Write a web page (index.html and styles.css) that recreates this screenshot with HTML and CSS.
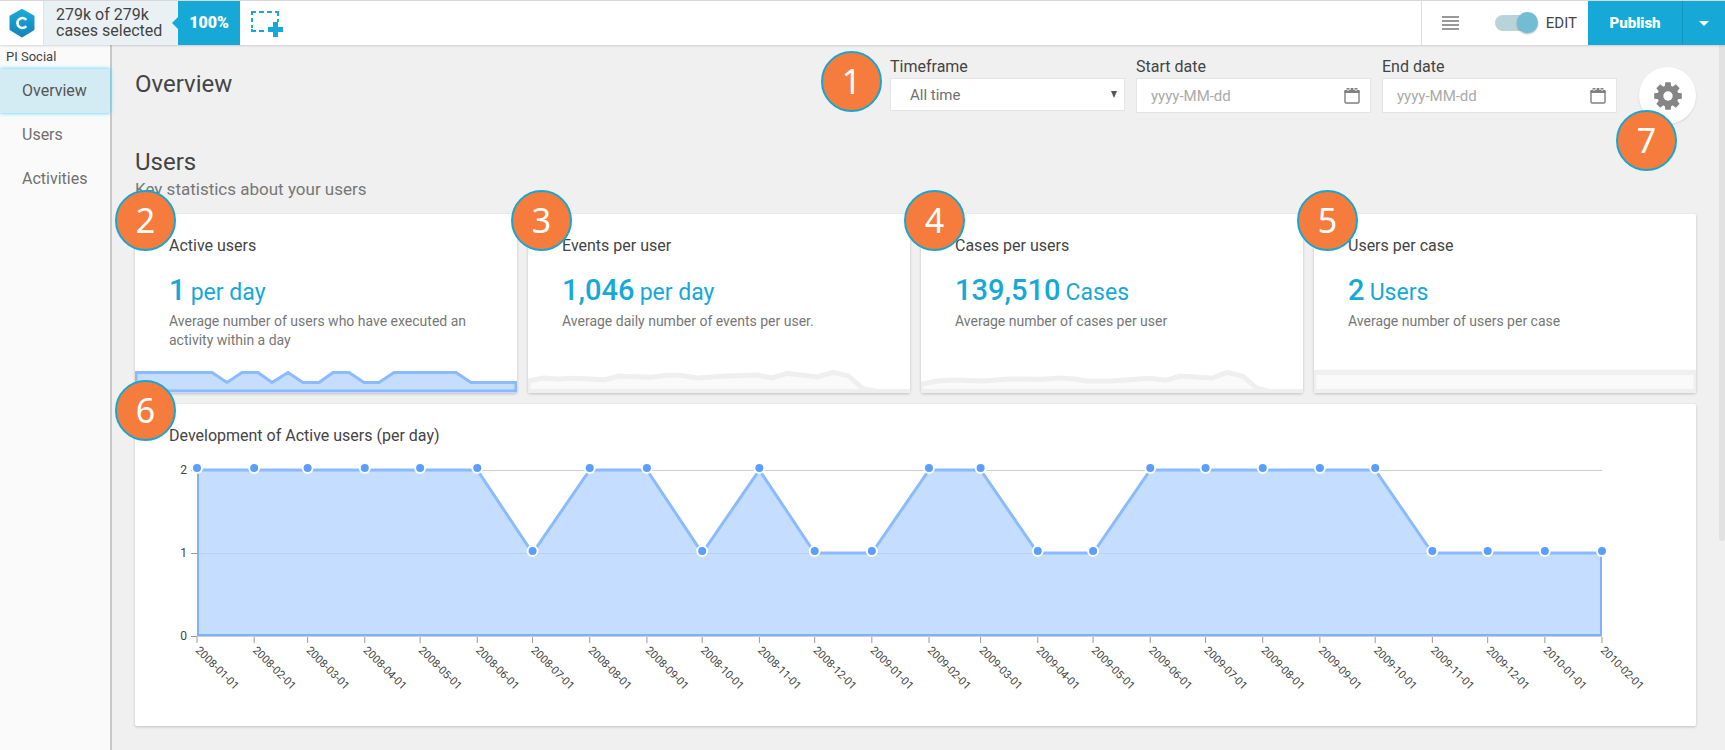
FILE: index.html
```html
<!DOCTYPE html>
<html lang="en">
<head>
    <meta charset="UTF-8">
    <meta name="viewport" content="width=device-width, initial-scale=1">
    <title>PI Social - Overview</title>

    <link rel="stylesheet" href="styles.css">
</head>
<body>

<header class="topbar">
    <a class="logo" href="#" aria-label="Home">
        <svg width="26" height="30" viewBox="0 0 26 30">
            <defs>
                <linearGradient id="logo-fill" x1="0" y1="0" x2="0" y2="1">
                    <stop offset="0" stop-color="#1aabd9"/>
                    <stop offset="1" stop-color="#1384b8"/>
                </linearGradient>
            </defs>
            <path d="M13 2 L24.500 8.300 V21.500 L13 28.500 L1.500 21.500 V8.300 Z" fill="url(#logo-fill)" stroke="url(#logo-fill)" stroke-width="2" stroke-linejoin="round"/>
            <path d="M17.300 11.800 A5 5 0 1 0 17.300 18.200" fill="none" stroke="#fff" stroke-width="2.600"/>
        </svg>
    </a>
    <div class="selection">279k of 279k<br>cases selected</div>
    <div class="percent">100%</div>
    <button class="icon-button add-selection" type="button" aria-label="Add selection">
        <svg width="34" height="28" viewBox="0 0 34 28" fill="none" stroke="#16a9d7">
            <path d="M2 6 V3 H6 M9 3 H14 M17 3 H22 M25 3 H28 V7 M28 10 V13 M2 9 V13 M2 16 V19 M2 20 V22 H6 M9 22 H14" stroke-width="2"/>
            <path d="M25.500 13 V28 M18 20.500 H33" stroke-width="5"/>
        </svg>
    </button>

    <div class="tools">
        <button class="icon-button" type="button" aria-label="List view">
            <svg width="17" height="14" viewBox="0 0 17 14" stroke="#999" stroke-width="2">
                <path d="M0 1 H17 M0 5 H17 M0 9 H17 M0 13 H17"/>
            </svg>
        </button>
        <label class="switch">
            <input class="switch-input" type="checkbox" checked>
            EDIT
        </label>
    </div>
    <button class="publish" type="button">Publish</button>
    <button class="publish-more" type="button" aria-label="More publish options">
        <svg width="10" height="5" viewBox="0 0 10 5"><path d="M0 0 H10 L5 5 Z" fill="#fff"/></svg>
    </button>
</header>

<div class="layout">
    <nav class="sidebar">
        <div class="sidebar-title">PI Social</div>
        <a class="sidebar-link active" href="#">Overview</a>
        <a class="sidebar-link" href="#">Users</a>
        <a class="sidebar-link" href="#">Activities</a>
    </nav>

    <main class="content">
        <div class="page-header">
            <h1 class="heading">Overview</h1>

            <form class="filters" action="/">
                <div class="filter">
                    <span class="marker marker-filter">1</span>
                    <label for="timeframe">Timeframe</label>
                    <div class="field field-select">
                        <select class="field-input" id="timeframe" name="timeframe">
                            <option>All time</option>
                        </select>
                        <svg class="field-icon arrow" width="6" height="7" viewBox="0 0 6 7"><path d="M0 0 H6 L3 7 Z" fill="#555"/></svg>
                    </div>
                </div>
                <div class="filter">
                    <label for="start">Start date</label>
                    <div class="field">
                        <input class="field-input" type="text" name="start" id="start" placeholder="yyyy-MM-dd">
                        <svg class="field-icon" width="16" height="17" viewBox="0 0 16 17" fill="none" stroke="#808080">
                            <path d="M1 4 V15 Q1 16 2 16 H14 Q15 16 15 15 V4" stroke-width="1.400"/>
                            <path d="M0.500 4.500 H15.500" stroke-width="3"/>
                            <path d="M4 1 V4 M8 1 V4 M12 1 V4" stroke-width="2.800"/>
                            <path d="M4 2 V4 M12 2 V4" stroke="#fff" stroke-width="1"/>
                        </svg>
                    </div>
                </div>
                <div class="filter">
                    <label for="end">End date</label>
                    <div class="field">
                        <input class="field-input" type="text" name="end" id="end" placeholder="yyyy-MM-dd">
                        <svg class="field-icon" width="16" height="17" viewBox="0 0 16 17" fill="none" stroke="#808080">
                            <path d="M1 4 V15 Q1 16 2 16 H14 Q15 16 15 15 V4" stroke-width="1.400"/>
                            <path d="M0.500 4.500 H15.500" stroke-width="3"/>
                            <path d="M4 1 V4 M8 1 V4 M12 1 V4" stroke-width="2.800"/>
                            <path d="M4 2 V4 M12 2 V4" stroke="#fff" stroke-width="1"/>
                        </svg>
                    </div>
                </div>
            </form>

            <div class="settings-wrap">
                <button class="settings" type="button" aria-label="Settings">
                    <svg width="28" height="28" viewBox="-14 -14 28 28">
                        <g fill="#858585">
                            <path id="teeth" d="M-3.300 -9 L-2.700 -13.800 H2.700 L3.300 -9 V9 L2.700 13.800 H-2.700 L-3.300 9 Z"/>
                            <use href="#teeth" transform="rotate(45)"/>
                            <use href="#teeth" transform="rotate(90)"/>
                            <use href="#teeth" transform="rotate(135)"/>
                            <circle r="10.500"/>
                        </g>
                        <circle r="4.700" fill="#fff"/>
                    </svg>
                </button>
                <span class="marker marker-settings">7</span>
            </div>
        </div>

        <h2 class="heading">Users</h2>
        <p class="subtitle">Key statistics about your users</p>

        <div class="cards">
            <section class="card">
                <span class="marker marker-edge">2</span>
                <h3 class="card-title">Active users</h3>
                <p class="value">1 <span class="unit">per day</span></p>
                <p class="description">Average number of users who have executed an activity within a day</p>
                <svg class="spark spark-blue" viewBox="0 0 382 24" preserveAspectRatio="none">
                    <path d="M1 3.500 H77 L92 13.500 L107 3.500 H123 L137 13.500 L153 3.500 L168 13.500 H184 L198 3.500 H214 L229 13.500 H244 L259 3.500 H321 L336 13.500 H381 V22 H1 Z"/>
                </svg>
            </section>
            <section class="card">
                <span class="marker marker-card">3</span>
                <h3 class="card-title">Events per user</h3>
                <p class="value">1,046 <span class="unit">per day</span></p>
                <p class="description">Average daily number of events per user.</p>
                <svg class="spark" viewBox="0 0 382 24" preserveAspectRatio="none">
                    <path d="M0 12 L15 9 L30 10 L45 9.300 L77 10.700 L91 7 L122 8.300 L139 6.300 H152 L169 9 L199 7 L229 6 L244 9 L259 4.300 L289 8 L305 3.300 L320 6.700 L335 19.700 L349 22.500 H382 H0 Z"/>
                </svg>
            </section>
            <section class="card">
                <span class="marker marker-card">4</span>
                <h3 class="card-title">Cases per users</h3>
                <p class="value">139,510 <span class="unit">Cases</span></p>
                <p class="description">Average number of cases per user</p>
                <svg class="spark" viewBox="0 0 382 24" preserveAspectRatio="none">
                    <path d="M0 15.300 L16 12 L32 11 L62 12 L89 10 L122 10.300 L139 9 L154 10 L167 12.300 H187 L229 9.300 L245 11.300 L259 7 L291 9 L306 3.300 L322 7.300 L336 19.300 L349 22.500 H382 H0 Z"/>
                </svg>
            </section>
            <section class="card">
                <span class="marker marker-card">5</span>
                <h3 class="card-title">Users per case</h3>
                <p class="value">2 <span class="unit">Users</span></p>
                <p class="description">Average number of users per case</p>
                <svg class="spark" viewBox="0 0 382 24" preserveAspectRatio="none">
                    <path d="M0 3.300 H382 V22.500 H0 Z"/>
                </svg>
            </section>
        </div>

        <section class="card chart-card">
            <span class="marker marker-edge">6</span>
            <h3 class="card-title">Development of Active users (per day)</h3>
            <svg class="chart" id="chart"></svg>
        </section>
    </main>
    <div class="scrollbar"></div>
</div>

<script src="script.js"></script>
</body>
</html>
```

FILE: styles.css
```css
* {
    box-sizing: border-box;
}

body {
    margin: 0;
    min-height: 100vh;
    display: flex;
    flex-direction: column;
    background: #f0f0f0;
    color: #444;
    font: 16px Roboto, sans-serif;
}

h1, h2, h3, p {
    margin: 0;
    font-weight: normal;
}

button {
    border: 0;
    padding: 0;
    font: inherit;
    cursor: pointer;
}

/* top bar */

.topbar {
    display: flex;
    height: 45px;
    background: #fff;
    border-top: 1px solid #d8d8d8;
    box-shadow: 0 1px 2px rgba(0, 0, 0, .15);
    position: relative;
    z-index: 1;
}

.logo {
    display: flex;
    align-items: center;
    justify-content: center;
    width: 43px;
}

.selection {
    width: 135px;
    padding: 6px 0 0 12px;
    border-left: 1px solid #dce4e8;
    background: #e9f1f5;
    line-height: 16px;
}

.percent {
    position: relative;
    width: 62px;
    background: #16a9d7;
    color: #fff;
    font-weight: 900;
    line-height: 44px;
    text-align: center;
}

.percent::before {
    content: "";
    position: absolute;
    left: -6px;
    top: 16px;
    border: solid transparent;
    border-width: 6px 6px 6px 0;
    border-right-color: #16a9d7;
}

.icon-button {
    display: flex;
    align-items: center;
    background: none;
}

.add-selection {
    padding-left: 10px;
}

.tools {
    display: flex;
    align-items: center;
    gap: 36px;
    margin-left: auto;
    padding: 0 11px 0 20px;
    border-left: 1px solid #ddd;
}

.switch {
    display: flex;
    align-items: center;
    gap: 8px;
    font-size: 15px;
}

.switch-input {
    position: relative;
    appearance: none;
    width: 43px;
    height: 16px;
    margin: 0;
    border-right: 4px solid #fff;
    border-radius: 8px 0 0 8px;
    background: #b6d4da;
}

.switch-input::after {
    content: "";
    position: absolute;
    right: -4px;
    top: -3px;
    width: 21px;
    height: 21px;
    border-radius: 50%;
    background: #73bdd4;
    box-shadow: 0 1px 2px rgba(0, 0, 0, .3);
}

.publish,
.publish-more {
    background: #16a9d7;
    color: #fff;
}

.publish {
    width: 94px;
    font-size: 15px;
    font-weight: 900;
}

.publish-more {
    width: 43px;
    border-left: 1px solid #1095c0;
}

.publish-more svg {
    display: block;
    margin: 0 auto;
}

/* layout */

.layout {
    position: relative;
    display: flex;
    flex: 1;
}

.sidebar {
    width: 112px;
    flex: none;
    border-right: 2px solid #c8c8c8;
    background: #fafafa;
}

.sidebar-title {
    padding-left: 6px;
    font-size: 13px;
    line-height: 24px;
}

.sidebar-link {
    display: block;
    padding-left: 22px;
    color: #707070;
    line-height: 44px;
    text-decoration: none;
}

.sidebar-link.active {
    background: #d3ecf4;
    box-shadow: 0 0 4px #3fcdfa;
    color: #555;
}

.content {
    flex: 1;
    padding: 12px 29px 24px 23px;
}

.scrollbar {
    position: absolute;
    top: 0;
    right: 0;
    width: 6px;
    height: 496px;
    border-radius: 0 0 3px 3px;
    background: #e2e2e2;
}

.page-header {
    display: flex;
    align-items: flex-start;
    height: 90px;
}

.heading {
    font-size: 24px;
    line-height: 30px;
}

.page-header .heading {
    padding-top: 12px;
}

.subtitle {
    margin-bottom: 12px;
    color: #777;
    font-size: 17px;
    line-height: 25px;
}

/* filters */

.filters {
    display: flex;
    gap: 11px;
    margin-left: auto;
}

.filter {
    position: relative;
    width: 235px;
}

.filter label {
    display: block;
    padding-bottom: 1px;
    line-height: 20px;
}

.field {
    display: flex;
    align-items: center;
    height: 35px;
    padding-right: 10px;
    border: 1px solid #e4e4e4;
    background: #fff;
}

.field-select {
    height: 33px;
    padding-right: 7px;
}

.field-input {
    appearance: none;
    flex: 1;
    min-width: 0;
    padding: 0 0 0 14px;
    border: 0;
    outline: none;
    background: none;
    color: #707070;
    font: 15px Roboto, sans-serif;
}

.field-select .field-input {
    padding-left: 19px;
}

.field-input::placeholder {
    color: #aaa;
}

.field-icon {
    flex: none;
}

.settings-wrap {
    position: relative;
    margin: 10px 0 0 22px;
}

.settings {
    display: flex;
    align-items: center;
    justify-content: center;
    width: 57px;
    height: 57px;
    border-radius: 50%;
    background: #fff;
    box-shadow: 0 1px 2px rgba(0, 60, 90, .15);
}

/* cards */

.cards {
    display: grid;
    grid-template-columns: repeat(4, 1fr);
    gap: 11px;
    margin-bottom: 11px;
}

.card {
    position: relative;
    display: flex;
    flex-direction: column;
    min-height: 179px;
    padding-top: 20px;
    border-radius: 2px;
    background: #fff;
    box-shadow: 0 1px 3px rgba(0, 0, 0, .2);
}

.card-title {
    padding: 0 34px;
    font-size: 16px;
    line-height: 24px;
}

.value {
    margin-top: 13px;
    padding: 0 34px;
    color: #16a9d7;
    font-size: 29px;
    font-weight: 500;
    line-height: 38px;
}

.unit {
    margin-left: -2px;
    font-size: 23px;
    font-weight: 400;
}

.description {
    padding: 0 40px 0 34px;
    color: #777;
    font-size: 14px;
    line-height: 19px;
}

.spark {
    display: block;
    width: 100%;
    height: 24px;
    margin-top: auto;
    fill: #fafafa;
    stroke: #efefef;
    stroke-width: 5px;
}

.spark-blue {
    fill: #c5ddff;
    stroke: #8cbaff;
    stroke-width: 3px;
}

/* numbered markers */

.marker {
    position: absolute;
    z-index: 2;
    width: 61px;
    height: 61px;
    border: 2px solid #16a6d2;
    border-radius: 50%;
    background: #f57c3c;
    color: #fff;
    font: 34px/57px "Noto Sans", sans-serif;
    text-align: center;
}

.marker-filter {
    left: -69px;
    top: -6px;
}

.marker-settings {
    left: -23px;
    top: 43px;
}

.marker-edge {
    left: -20px;
    top: -24px;
}

.marker-card {
    left: -17px;
    top: -24px;
}

/* chart */

.chart {
    display: block;
    width: 100%;
    height: 278px;
}

.chart text {
    fill: #444;
    font-size: 12px;
}

.chart .date {
    font-size: 11px;
}

.grid-line {
    stroke: #ccc;
}

.tick {
    stroke: #999;
}

.area {
    fill: #c5ddff;
}

.area-grid {
    stroke: #b4d0f3;
}

.area-line {
    fill: none;
    stroke: #8cbaff;
    stroke-width: 3px;
}

.area-edge {
    fill: none;
    stroke: #7fb0f8;
    stroke-width: 2px;
}

.dot {
    fill: #5a9eff;
    stroke: #fff;
    stroke-width: 2px;
}
```

FILE: script.js
```js
'use strict';

// active users per month, starting with January 2008
const values = [2, 2, 2, 2, 2, 2, 1, 2, 2, 1, 2, 1, 1, 2, 2, 1, 1, 2, 2, 2, 2, 2, 1, 1, 1, 1];
const dates = values.map((value, i) => new Date(Date.UTC(2008, i, 1)));

const chart = document.getElementById('chart');

function drawChart() {
    const left = 62;
    const right = chart.clientWidth - 94;
    const bottom = 188;
    const step = 83;

    const first = dates[0];
    const last = dates[dates.length - 1];
    const x = date => left + (right - left) * (date - first) / (last - first);
    const y = value => bottom - value * step;

    let html = '';

    for (let value = 0; value <= 2; value++) {
        html += `<path class="grid-line" d="M${left} ${y(value) + 0.5} H${right}"/>`;
        html += `<path class="tick" d="M${left - 6} ${y(value) + 0.5} H${left}"/>`;
        html += `<text x="${left - 10}" y="${y(value) + 4}" text-anchor="end">${value}</text>`;
    }

    const line = values.map((value, i) => `${x(dates[i])} ${y(value)}`).join(' L');
    html += `<path class="area" d="M${left} ${bottom} L${line} V${bottom} Z"/>`;
    html += `<path class="area-grid" d="M${left} ${y(1) + 0.5} H${right}"/>`;
    html += `<path class="area-edge" d="M${left + 1} ${y(values[0])} V${bottom - 1} H${right - 1} V${y(1)}"/>`;
    html += `<path class="area-line" d="M${line}"/>`;

    dates.forEach((date, i) => {
        const px = x(date);
        html += `<path class="tick" d="M${px} ${bottom + 1} V${bottom + 7}"/>`;
        html += `<circle class="dot" cx="${px}" cy="${y(values[i]) - 2}" r="5"/>`;
        html += `<text class="date" transform="translate(${px - 2} ${bottom + 15}) rotate(45)">${date.toISOString().slice(0, 10)}</text>`;
    });

    chart.innerHTML = html;
}

drawChart();
window.addEventListener('resize', drawChart);
```
